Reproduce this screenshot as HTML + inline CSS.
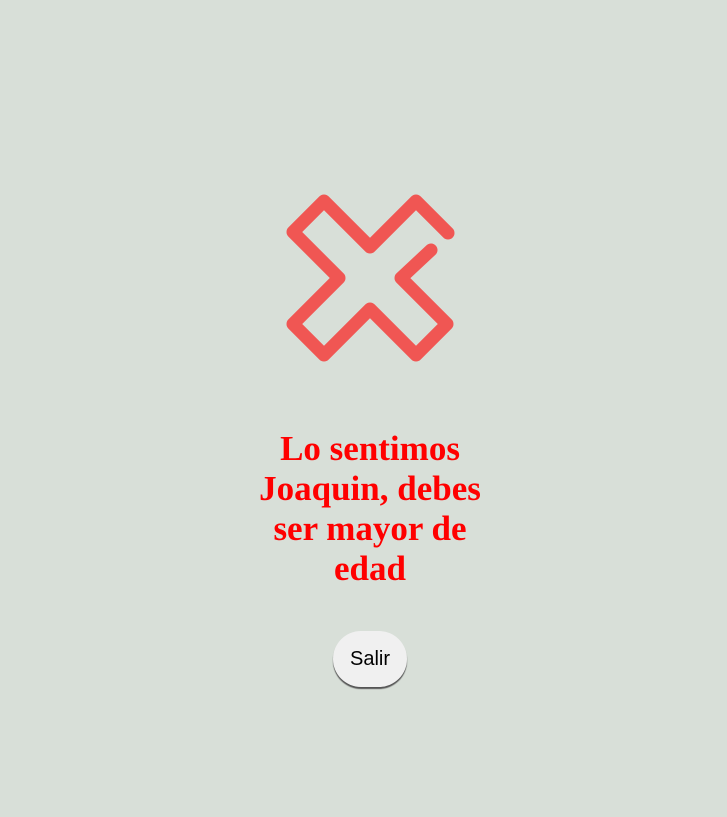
<!DOCTYPE html>
<html><head><style>
html,body{margin:0;padding:0;background:#d8dfd8;width:727px;height:817px;overflow:hidden}
svg{position:absolute;left:0;top:0}
h1{position:absolute;left:240px;top:429px;width:260px;margin:0;text-align:center;color:#ff0000;font:bold 35px/40px "Liberation Serif",serif}
.b{position:absolute;left:333px;top:631px;width:74px;height:56px;border-radius:28px;background:#f0f0f0;box-shadow:0 2px 1px #555;font:20px "Liberation Sans",sans-serif;color:#000;text-align:center;line-height:56px}
</style></head><body>
<svg width="727" height="817"><path d="M448 233 L416 201 L370 247 L324 201 L293 232 L339 278 L293 324 L324 355 L370 309 L416 355 L447 324 L401 278 L431 250" fill="none" stroke="#f05653" stroke-width="13" stroke-linecap="round" stroke-linejoin="round"/></svg>
<h1>Lo sentimos Joaquin, debes ser mayor de edad</h1>
<div class="b">Salir</div>
</body></html>
